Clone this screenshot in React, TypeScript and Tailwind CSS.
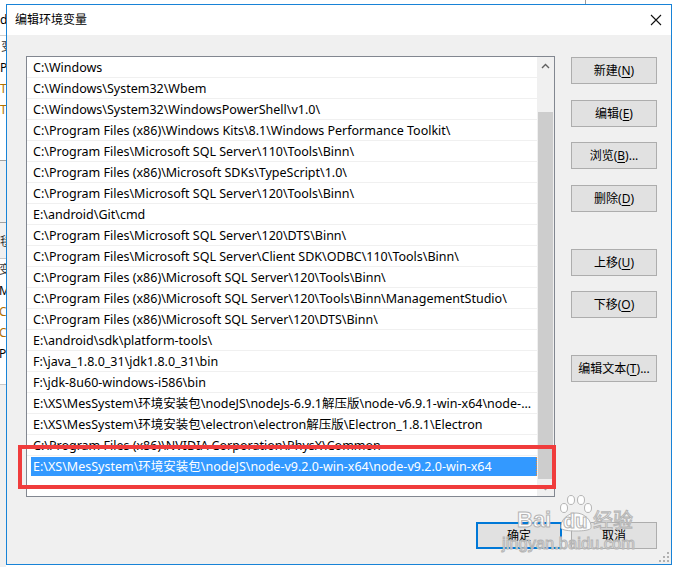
import React from 'react';

const paths: string[] = [
  'C:\\Windows',
  'C:\\Windows\\System32\\Wbem',
  'C:\\Windows\\System32\\WindowsPowerShell\\v1.0\\',
  'C:\\Program Files (x86)\\Windows Kits\\8.1\\Windows Performance Toolkit\\',
  'C:\\Program Files\\Microsoft SQL Server\\110\\Tools\\Binn\\',
  'C:\\Program Files (x86)\\Microsoft SDKs\\TypeScript\\1.0\\',
  'C:\\Program Files\\Microsoft SQL Server\\120\\Tools\\Binn\\',
  'E:\\android\\Git\\cmd',
  'C:\\Program Files\\Microsoft SQL Server\\120\\DTS\\Binn\\',
  'C:\\Program Files\\Microsoft SQL Server\\Client SDK\\ODBC\\110\\Tools\\Binn\\',
  'C:\\Program Files (x86)\\Microsoft SQL Server\\120\\Tools\\Binn\\',
  'C:\\Program Files (x86)\\Microsoft SQL Server\\120\\Tools\\Binn\\ManagementStudio\\',
  'C:\\Program Files (x86)\\Microsoft SQL Server\\120\\DTS\\Binn\\',
  'E:\\android\\sdk\\platform-tools\\',
  'F:\\java_1.8.0_31\\jdk1.8.0_31\\bin',
  'F:\\jdk-8u60-windows-i586\\bin',
  'E:\\XS\\MesSystem\\环境安装包\\nodeJS\\nodeJs-6.9.1解压版\\node-v6.9.1-win-x64\\node-...',
  'E:\\XS\\MesSystem\\环境安装包\\electron\\electron解压版\\Electron_1.8.1\\Electron',
  'C:\\Program Files (x86)\\NVIDIA Corporation\\PhysX\\Common',
];

const selectedPath = 'E:\\XS\\MesSystem\\环境安装包\\nodeJS\\node-v9.2.0-win-x64\\node-v9.2.0-win-x64';

const WinButton: React.FC<{ label: string; hot: string; tail?: string; className?: string }> = ({ label, hot, tail = '', className = '' }) => (
  <div className={`w-[86px] h-[27px] bg-[#e1e1e1] border border-[#adadad] flex items-center justify-center text-[12px] text-black ${className}`}>
    {label}(<span className="underline underline-offset-2">{hot}</span>){tail}
  </div>
);

const App: React.FC = () => {
  return (
    <div className="w-[673px] h-[567px] bg-white flex flex-col overflow-hidden font-['Noto_Sans','Noto_Sans_CJK_SC',sans-serif] text-black">
      {/* strip of the window behind, above the dialog */}
      <div className="h-[4px] flex">
        <div className="w-[585px]" />
        <div className="w-[1px] bg-[#9a9a9a]" />
      </div>

      <div className="flex flex-1">
        {/* sliver of the window behind, left */}
        <div className="w-[6px] flex flex-col overflow-hidden text-[12px] leading-[21px] text-black">
          <div className="h-[31px] bg-white pt-[5px]">d</div>
          <div className="h-[1px] bg-[#d0d0d0]" />
          <div className="h-[124px] bg-white pl-[1px]">
            <div className="text-[#333]">变</div>
            <div className="-ml-[1px]">P</div>
            <div className="-ml-[1px] text-[#b07000]">T</div>
            <div className="-ml-[1px] text-[#b07000]">T</div>
          </div>
          <div className="h-[1px] bg-[#a0a0a0]" />
          <div className="h-[61px] bg-[#f0f0f0]" />
          <div className="h-[1px] bg-[#a0a0a0]" />
          <div className="h-[35px] bg-[#f0f0f0] pt-[8px] text-[#333]">毯</div>
          <div className="h-[1px] bg-[#c8c8c8]" />
          <div className="h-[125px] bg-white -ml-[1px]">
            <div className="text-[#333]">变</div>
            <div>M</div>
            <div className="text-[#b07000]">C</div>
            <div className="text-[#b07000]">C</div>
            <div>P</div>
            <div className="h-[8px] overflow-hidden">r</div>
          </div>
          <div className="h-[1px] bg-[#c8c8c8]" />
          <div className="flex-1 bg-[#f0f0f0]" />
        </div>

        {/* dialog */}
        <div className="relative w-[666px] h-[561px] border border-[#1883d7] bg-[#f0f0f0] flex flex-col">
          <div className="h-[30px] bg-white flex items-center justify-between pl-[8px] pr-[9px]">
            <span className="text-[12px]">编辑环境变量</span>
            <svg width="12" height="12" viewBox="0 0 12 12" className="block">
              <path d="M1 1 L11 11 M11 1 L1 11" stroke="#111" strokeWidth="1.1" fill="none" />
            </svg>
          </div>

          <div className="flex-1 flex flex-col">
            <div className="flex pt-[21px] pl-[19px]">
              {/* path list */}
              <div className="w-[529px] h-[441px] border border-[#828790] bg-white flex">
                <div className="flex-1 min-w-0 flex flex-col text-[12.5px]">
                  {paths.map((p) => (
                    <div key={p} className="h-[21px] shrink-0 border-b border-[#f0f0f0] flex items-center pl-[6px] pt-[3px] whitespace-nowrap overflow-hidden">
                      {p}
                    </div>
                  ))}
                  <div className="h-[21px] shrink-0 pl-[4px] py-[1px]">
                    <div className="h-full bg-[#3399ff] text-white pl-[2px] pt-[2px] flex items-center whitespace-nowrap overflow-hidden border-r border-dotted border-[#e08a3c]">
                      {selectedPath}
                    </div>
                  </div>
                </div>
                {/* scrollbar */}
                <div className="w-[17px] bg-[#f0f0f0] flex flex-col">
                  <div className="h-[17px] flex items-center justify-center">
                    <svg width="9" height="6" viewBox="0 0 9 6">
                      <path d="M1 5 L4.5 1.5 L8 5" stroke="#606060" strokeWidth="1.4" fill="none" />
                    </svg>
                  </div>
                  <div className="h-[38px]" />
                  <div className="flex-1 mx-[1px] bg-[#cdcdcd]" />
                  <div className="h-[17px] flex items-center justify-center">
                    <svg width="9" height="6" viewBox="0 0 9 6">
                      <path d="M1 1 L4.5 4.5 L8 1" stroke="#a0a0a0" strokeWidth="1.4" fill="none" />
                    </svg>
                  </div>
                </div>
              </div>

              {/* action buttons */}
              <div className="ml-[16px] flex flex-col">
                <WinButton label="新建" hot="N" className="mt-[1px]" />
                <WinButton label="编辑" hot="E" className="mt-[16px]" />
                <WinButton label="浏览" hot="B" tail="..." className="mt-[15px]" />
                <WinButton label="删除" hot="D" className="mt-[16px]" />
                <WinButton label="上移" hot="U" className="mt-[37px]" />
                <WinButton label="下移" hot="O" className="mt-[15px]" />
                <WinButton label="编辑文本" hot="T" tail="..." className="mt-[37px]" />
              </div>
            </div>

            <div className="flex justify-end gap-[9px] pr-[14px] mt-[25px]">
              <div className="w-[86px] h-[27px] bg-[#e1e1e1] border-2 border-[#0078d7] flex items-center justify-center text-[12px]">确定</div>
              <div className="w-[86px] h-[27px] bg-[#e1e1e1] border border-[#adadad] flex items-center justify-center text-[12px]">取消</div>
            </div>
          </div>

          {/* resize grip */}
          <svg width="10" height="10" viewBox="0 0 10 10" className="absolute right-[2px] bottom-[2px]">
            <rect x="8" y="0" width="2" height="2" fill="#b0b0b0" />
            <rect x="4" y="4" width="2" height="2" fill="#b0b0b0" />
            <rect x="8" y="4" width="2" height="2" fill="#b0b0b0" />
            <rect x="0" y="8" width="2" height="2" fill="#b0b0b0" />
            <rect x="4" y="8" width="2" height="2" fill="#b0b0b0" />
            <rect x="8" y="8" width="2" height="2" fill="#b0b0b0" />
          </svg>

          {/* red highlight frame */}
          <div className="absolute left-[11px] top-[440px] w-[538px] h-[44px] border-4 border-[#f03c3c]" />

          {/* watermark */}
          <div className="absolute inset-0 pointer-events-none text-[rgba(255,255,255,0.92)] [-webkit-text-stroke:1px_#b4b4b4] font-['Liberation_Sans',sans-serif]">
            <span className="absolute left-[510px] top-[504px] text-[22px] font-bold leading-none">Bai</span>
            <svg width="38" height="38" viewBox="0 0 38 38" className="absolute left-[550px] top-[489px]">
              <g fill="rgba(255,255,255,0.92)" stroke="#b4b4b4" strokeWidth="1">
                <ellipse cx="7" cy="14" rx="3.5" ry="4.5" />
                <ellipse cx="14" cy="6" rx="3.5" ry="4.5" />
                <ellipse cx="24" cy="6" rx="3.5" ry="4.5" />
                <ellipse cx="31" cy="14" rx="3.5" ry="4.5" />
                <path d="M4 34 C3 26 11 19 19 19 C27 19 35 26 34 34 C33 38 5 38 4 34 Z" />
              </g>
            </svg>
            <span className="absolute left-[556px] top-[506px] text-[20px] font-bold leading-none">du</span>
            <span className="absolute left-[586px] top-[505px] text-[20px] leading-none font-['Noto_Sans_CJK_SC',sans-serif]">经验</span>
            <span className="absolute left-[495px] top-[530px] text-[16.5px] leading-none">jingyan.baidu.com</span>
          </div>
        </div>

        <div className="flex-1" />
      </div>
    </div>
  );
};

export default App;
